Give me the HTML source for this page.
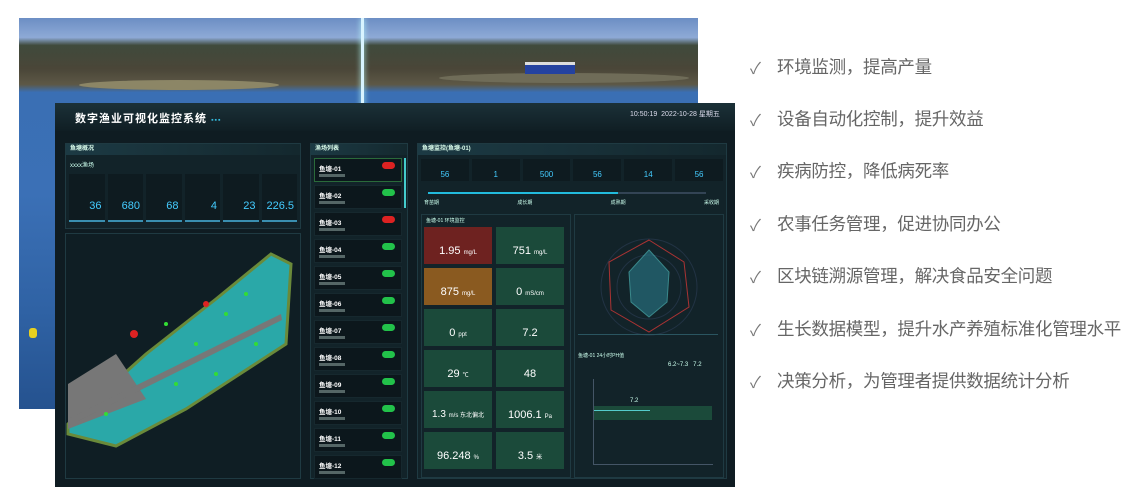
<!DOCTYPE html>
<html><head><meta charset="utf-8"><style>
*{margin:0;padding:0;box-sizing:border-box}
body{width:1145px;height:499px;background:#fff;position:relative;overflow:hidden;font-family:"Liberation Sans","Noto Sans CJK SC",sans-serif}
.a{position:absolute}
.photo{left:19px;top:18px;width:679px;height:391px;background:linear-gradient(180deg,#6c8ec4 0%,#8eaad6 5%,#3f4a3c 7%,#4a4638 13%,#5d5846 17%,#3a6fb4 19%,#3b70b6 45%,#2f62a4 75%,#25528f 100%);overflow:hidden}
.dash{left:55px;top:103px;width:680px;height:384px;background:#0f1c22;color:#cfe;font-size:7px;overflow:hidden}
.panel{position:absolute;border:1px solid #1f3a42;background:#122329}
.ph{height:11px;background:linear-gradient(90deg,#1c3a44,#14282e);color:#dfe;font-size:6px;padding-left:4px;line-height:11px;font-weight:bold}
.item{position:absolute;left:3px;width:88px;height:24px;background:#0c171c;border:1px solid #16282e}
.item b{position:absolute;left:4px;top:4px;font-size:6.5px;color:#fff}
.item i{position:absolute;right:6px;top:3px;width:13px;height:7px;border-radius:4px;background:#22c24a}
.item s{position:absolute;left:4px;top:15px;width:26px;height:3px;background:#566;text-decoration:none}
.card{position:absolute;width:68px;height:37px;background:#1b4a3a;color:#fff;text-align:center;white-space:nowrap}
.card .v{position:absolute;top:18px;width:100%;font-size:11px}
.card .v small{font-size:6px}
.chk{position:absolute;left:750px;color:#777;font-size:16px}
.tx{position:absolute;left:777px;color:#666;font-size:17.5px;letter-spacing:-0.3px}
</style></head><body>
<div class="a photo">
 <div class="a" style="left:60px;top:62px;width:200px;height:10px;background:#8c8666;border-radius:50%"></div>
 <div class="a" style="left:420px;top:55px;width:250px;height:10px;background:#6f6c58;border-radius:50%"></div>
 <div class="a" style="left:506px;top:44px;width:50px;height:12px;background:#2442a0;border-top:3px solid #ddd"></div>
 <div class="a" style="left:342px;top:0;width:3px;height:90px;background:#d8f4ff;box-shadow:0 0 6px #bff"></div>
 <div class="a" style="left:10px;top:310px;width:8px;height:10px;background:#e8d020;border-radius:3px"></div>
</div>
<div class="a dash">
 <div class="a" style="left:0;top:0;width:680px;height:28px;background:linear-gradient(180deg,#1b3138,#101e24)"></div>
 <div class="a" style="left:20px;top:7px;font-size:11px;font-weight:bold;color:#fff;letter-spacing:1px">数字渔业可视化监控系统 <span style="color:#3bd;font-size:7px">▪▪▪</span></div>
 <div class="a" style="left:575px;top:6px;font-size:7px;color:#dde">10:50:19 &nbsp;2022-10-28 星期五</div>
 <div class="panel" style="left:10px;top:40px;width:236px;height:86px"><div class="ph">鱼塘概况</div>
  <div class="a" style="left:4px;top:16px;font-size:6px">xxxx渔场</div>
  <div class="a" style="left:3px;top:30px;width:228px;height:48px;display:flex;gap:3px;color:#4cf;font-size:11px;text-align:right">
   <div style="flex:1;background:#0e1b20;padding:26px 3px 0 0;border-bottom:2px solid #3a8fb0">36</div>
   <div style="flex:1;background:#0e1b20;padding:26px 3px 0 0;border-bottom:2px solid #3a8fb0">680</div>
   <div style="flex:1;background:#0e1b20;padding:26px 3px 0 0;border-bottom:2px solid #3a8fb0">68</div>
   <div style="flex:1;background:#0e1b20;padding:26px 3px 0 0;border-bottom:2px solid #3a8fb0">4</div>
   <div style="flex:1;background:#0e1b20;padding:26px 3px 0 0;border-bottom:2px solid #3a8fb0">23</div>
   <div style="flex:1;background:#0e1b20;padding:26px 3px 0 0;border-bottom:2px solid #3a8fb0">226.5</div>
  </div></div>
 <div class="panel" style="left:10px;top:130px;width:236px;height:246px;background:#0f1e24">
  <svg class="a" style="left:0;top:0" width="236" height="246"><polygon points="2,190 80,120 150,65 205,20 225,30 220,110 120,175 50,212 2,200" fill="#2aa8a8" stroke="#6a8a3a" stroke-width="3"/><polygon points="2,150 50,120 80,165 2,195" fill="#777"/><polygon points="2,185 215,80 216,86 2,192" fill="#777"/><circle cx="68" cy="100" r="4" fill="#d22"/><circle cx="140" cy="70" r="3" fill="#d22"/><g fill="#3d3"><circle cx="100" cy="90" r="2"/><circle cx="130" cy="110" r="2"/><circle cx="160" cy="80" r="2"/><circle cx="180" cy="60" r="2"/><circle cx="150" cy="140" r="2"/><circle cx="110" cy="150" r="2"/><circle cx="190" cy="110" r="2"/><circle cx="40" cy="180" r="2"/></g></svg>
 </div>
 <div class="panel" style="left:255px;top:40px;width:98px;height:336px"><div class="ph">渔场列表</div>
  <div class="item" style="top:14px;border-color:#2a6a3a"><b>鱼塘-01</b><i style="background:#d22"></i><s></s></div>
  <div class="item" style="top:41px"><b>鱼塘-02</b><i></i><s></s></div>
  <div class="item" style="top:68px"><b>鱼塘-03</b><i style="background:#d22"></i><s></s></div>
  <div class="item" style="top:95px"><b>鱼塘-04</b><i></i><s></s></div>
  <div class="item" style="top:122px"><b>鱼塘-05</b><i></i><s></s></div>
  <div class="item" style="top:149px"><b>鱼塘-06</b><i></i><s></s></div>
  <div class="item" style="top:176px"><b>鱼塘-07</b><i></i><s></s></div>
  <div class="item" style="top:203px"><b>鱼塘-08</b><i></i><s></s></div>
  <div class="item" style="top:230px"><b>鱼塘-09</b><i></i><s></s></div>
  <div class="item" style="top:257px"><b>鱼塘-10</b><i></i><s></s></div>
  <div class="item" style="top:284px"><b>鱼塘-11</b><i></i><s></s></div>
  <div class="item" style="top:311px"><b>鱼塘-12</b><i></i><s></s></div>
  <div class="a" style="left:93px;top:14px;width:2px;height:50px;background:#4cc"></div>
 </div>
 <div class="panel" style="left:362px;top:40px;width:310px;height:336px"><div class="ph">鱼塘监控(鱼塘-01)</div>
  <div class="a" style="left:3px;top:15px;width:302px;height:22px;display:flex;gap:3px;color:#4cf;font-size:8px;text-align:center">
   <div style="flex:1;background:#0e1b20;padding-top:11px">56</div><div style="flex:1;background:#0e1b20;padding-top:11px">1</div><div style="flex:1;background:#0e1b20;padding-top:11px">500</div><div style="flex:1;background:#0e1b20;padding-top:11px">56</div><div style="flex:1;background:#0e1b20;padding-top:11px">14</div><div style="flex:1;background:#0e1b20;padding-top:11px">56</div></div>
  <div class="a" style="left:10px;top:48px;width:278px;height:2px;background:#345"></div>
  <div class="a" style="left:10px;top:48px;width:190px;height:2px;background:#2bd"></div>
  <div class="a" style="left:6px;top:55px;width:295px;font-size:5px;display:flex;justify-content:space-between"><span>育苗期</span><span>成长期</span><span>成熟期</span><span>采收期</span></div>
  <div class="a" style="left:3px;top:70px;width:150px;height:264px;border:1px solid #1f3a42"></div>
  <div class="a" style="left:8px;top:73px;font-size:5px">鱼塘-01 环境监控</div>
  <div class="card" style="left:6px;top:83px;background:#6e2220"><div class="v">1.95 <small>mg/L</small></div></div>
  <div class="card" style="left:78px;top:83px"><div class="v">751 <small>mg/L</small></div></div>
  <div class="card" style="left:6px;top:124px;background:#8a5a20"><div class="v">875 <small>mg/L</small></div></div>
  <div class="card" style="left:78px;top:124px"><div class="v">0 <small>mS/cm</small></div></div>
  <div class="card" style="left:6px;top:165px"><div class="v">0 <small>ppt</small></div></div>
  <div class="card" style="left:78px;top:165px"><div class="v">7.2</div></div>
  <div class="card" style="left:6px;top:206px"><div class="v">29 <small>℃</small></div></div>
  <div class="card" style="left:78px;top:206px"><div class="v">48</div></div>
  <div class="card" style="left:6px;top:247px"><div class="v" style="font-size:10px">1.3 <small>m/s 东北偏北</small></div></div>
  <div class="card" style="left:78px;top:247px"><div class="v">1006.1 <small>Pa</small></div></div>
  <div class="card" style="left:6px;top:288px"><div class="v">96.248 <small>%</small></div></div>
  <div class="card" style="left:78px;top:288px"><div class="v">3.5 <small>米</small></div></div>
  <div class="a" style="left:156px;top:70px;width:150px;height:264px;border:1px solid #1f3a42"></div>
  <svg class="a" style="left:171px;top:88px" width="120" height="110"><circle cx="60" cy="55" r="48" fill="none" stroke="#234"/><circle cx="60" cy="55" r="32" fill="none" stroke="#234"/><polygon points="60,18 80,40 78,70 60,85 42,70 40,40" fill="#2a7a8a" opacity=".6" stroke="#5cc"/><polygon points="60,8 95,30 100,75 60,100 22,78 20,30" fill="none" stroke="#a33"/></svg>
  <div class="a" style="left:160px;top:190px;width:140px;height:1px;background:#2a5560"></div>
  <div class="a" style="left:160px;top:208px;font-size:5px">鱼塘-01 24小时PH值</div>
  <div class="a" style="left:250px;top:218px;font-size:6px">6.2~7.3 &nbsp; 7.2</div>
  <div class="a" style="left:175px;top:235px;width:1px;height:85px;background:#456"></div>
  <div class="a" style="left:175px;top:320px;width:120px;height:1px;background:#456"></div>
  <div class="a" style="left:176px;top:262px;width:118px;height:14px;background:#1b4a3a"></div>
  <div class="a" style="left:176px;top:266px;width:56px;height:1px;background:#5cc"></div>
  <div class="a" style="left:212px;top:254px;font-size:6px">7.2</div>
 </div>
</div>
<div class="chk" style="top:55px">✓</div><div class="tx" style="top:54px">环境监测，提高产量</div>
<div class="chk" style="top:107px">✓</div><div class="tx" style="top:106px">设备自动化控制，提升效益</div>
<div class="chk" style="top:159px">✓</div><div class="tx" style="top:158px">疾病防控，降低病死率</div>
<div class="chk" style="top:212px">✓</div><div class="tx" style="top:211px">农事任务管理，促进协同办公</div>
<div class="chk" style="top:264px">✓</div><div class="tx" style="top:263px">区块链溯源管理，解决食品安全问题</div>
<div class="chk" style="top:317px">✓</div><div class="tx" style="top:316px">生长数据模型，提升水产养殖标准化管理水平</div>
<div class="chk" style="top:369px">✓</div><div class="tx" style="top:368px">决策分析，为管理者提供数据统计分析</div>
</body></html>
